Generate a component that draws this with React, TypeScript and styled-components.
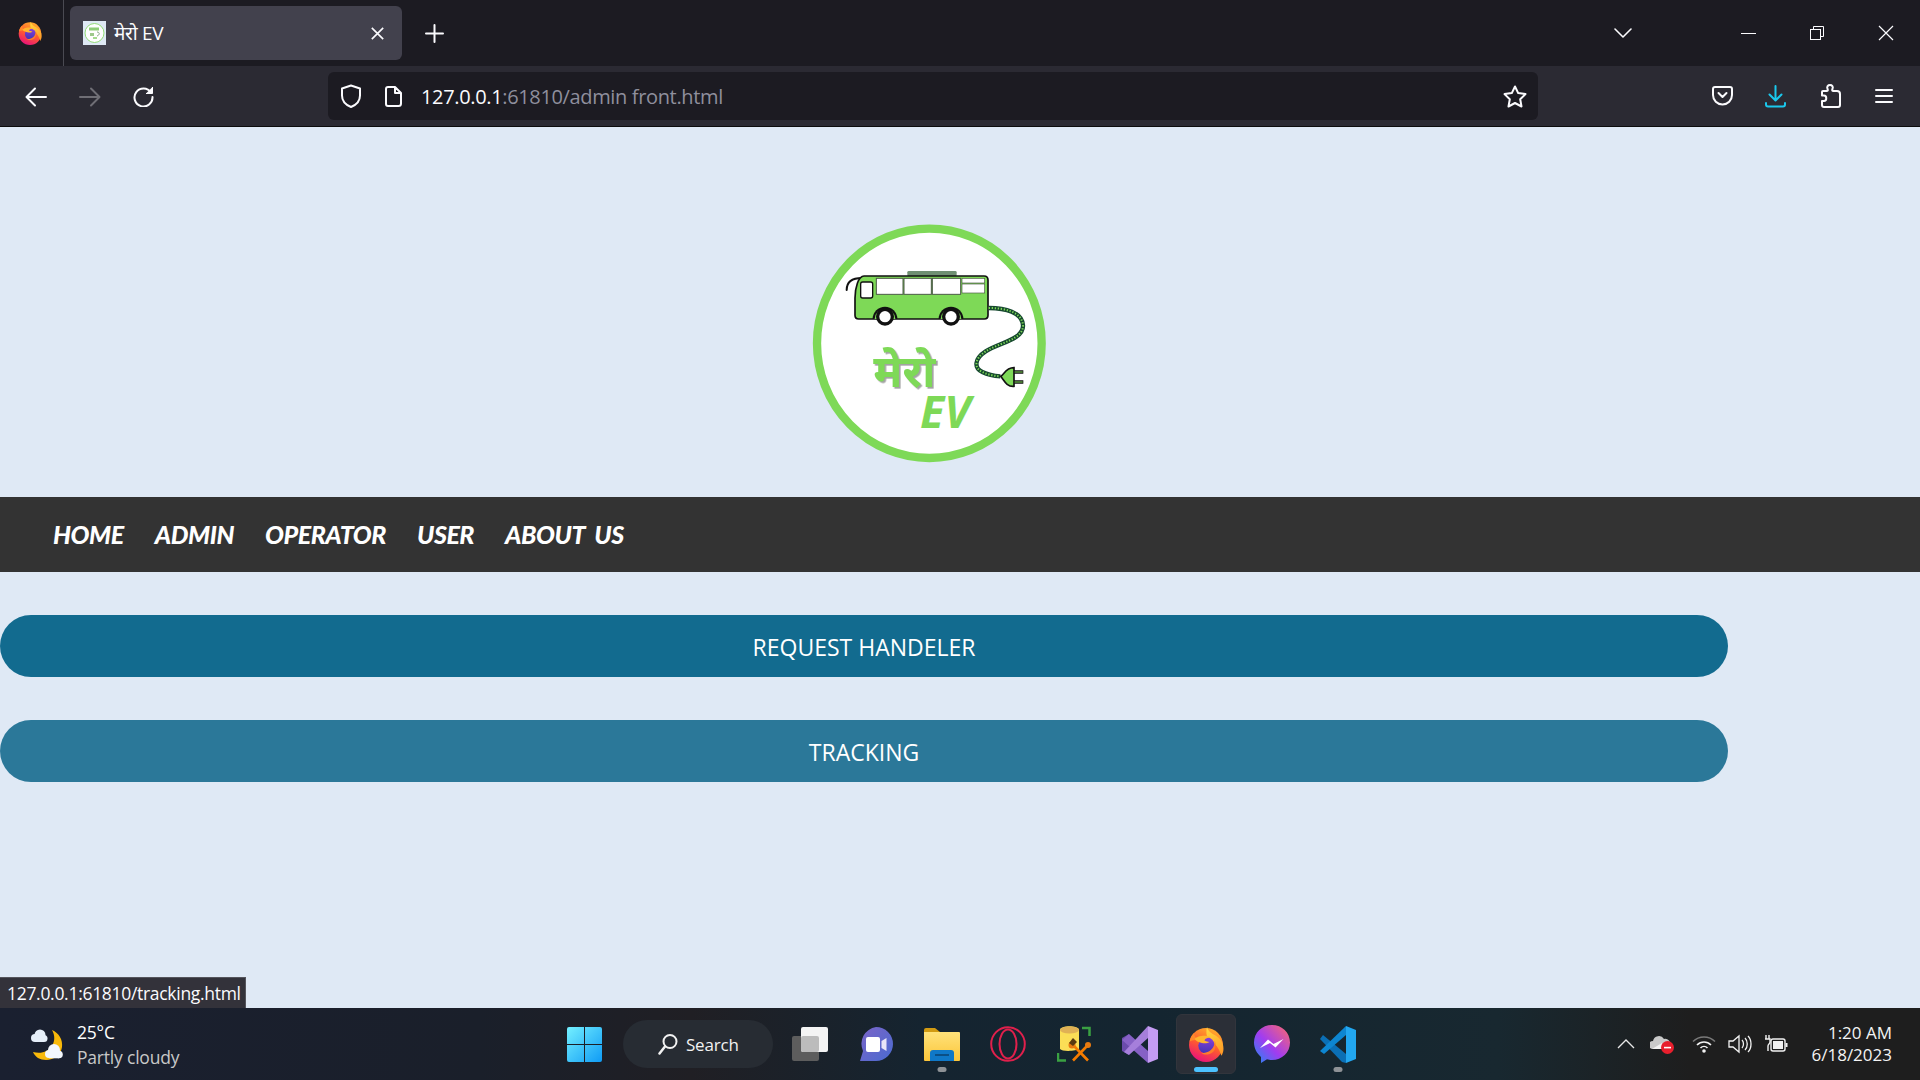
import styled, { createGlobalStyle } from "styled-components";

const GlobalStyle = createGlobalStyle`
  html, body {
    margin: 0;
    padding: 0;
    background: #dfe9f5;
    overflow: hidden;
  }
  * { box-sizing: border-box; }
`;

const UI_FONT = `"Open Sans", "Noto Sans", "Noto Sans Devanagari", "Lohit Devanagari", sans-serif`;

const Page = styled.div`
  width: 1920px;
  height: 1080px;
  display: flex;
  flex-direction: column;
  font-family: ${UI_FONT};
`;

/* ---------- browser chrome ---------- */
const TabBar = styled.div`
  height: 66px;
  flex: none;
  display: flex;
  align-items: center;
  padding: 0 26px 0 18px;
  background: #1c1b22;
`;
const TabDivider = styled.div`
  width: 1px;
  height: 66px;
  margin: 0 6px 0 21px;
  background: #4a4a52;
`;
const Tab = styled.div`
  width: 332px;
  height: 54px;
  display: flex;
  align-items: center;
  padding: 0 18px 0 13px;
  border-radius: 6px;
  background: #42414d;
`;
const TabTitle = styled.span`
  margin-left: 8px;
  font-size: 19px;
  letter-spacing: -0.3px;
  color: #fbfbfe;
`;
const TabClose = styled.div`
  margin-left: auto;
  display: flex;
`;
const NewTab = styled.div`
  margin-left: 23px;
  display: flex;
`;
const WindowControls = styled.div`
  margin-left: auto;
  display: flex;
  align-items: center;
  gap: 54px;
`;
const TabListButton = styled.div`
  display: flex;
  margin-right: 55px;
`;
const Toolbar = styled.div`
  height: 61px;
  flex: none;
  display: flex;
  align-items: center;
  padding-left: 25px;
  background: #2b2a33;
  border-bottom: 1px solid #0c0c0d;
`;
const NavButtons = styled.div`
  display: flex;
  align-items: center;
  gap: 32px;
  margin-top: 1px;
`;
const UrlBar = styled.div`
  width: 1210px;
  height: 48px;
  margin-left: 174px;
  display: flex;
  align-items: center;
  padding: 0 11px 0 12px;
  border-radius: 6px;
  background: #1c1b22;
`;
const UrlText = styled.div`
  margin: 1px 0 0 19px;
  font-size: 20px;
  letter-spacing: -0.35px;
  color: #8f8f9d;
  white-space: pre;
`;
const UrlHost = styled.span`
  color: #fbfbfe;
`;
const UrlPageIcon = styled.div`
  display: flex;
  margin-left: 23px;
`;
const UrlStar = styled.div`
  display: flex;
  margin-left: auto;
`;
const ToolIcons = styled.div`
  margin-left: 174px;
  display: flex;
  align-items: center;
`;
const ToolSlot = styled.div<{ $gap?: number }>`
  display: flex;
  margin-left: ${(p) => p.$gap ?? 0}px;
`;
const ArrowSvg = styled.svg<{ $flip?: boolean }>`
  transform: ${(p) => (p.$flip ? "scaleX(-1)" : "none")};
`;

/* ---------- page content ---------- */
const Content = styled.main`
  position: relative;
  flex: 1;
  display: flex;
  flex-direction: column;
  background: #dfe9f5;
`;
const LogoHeader = styled.header`
  height: 370px;
  flex: none;
  display: flex;
  justify-content: center;
  padding: 83px 70px 0 0;
`;
const LogoHindi = styled.text`
  font-family: "Noto Sans Devanagari", "Lohit Devanagari", "Noto Sans", sans-serif;
  font-size: 134px;
  font-weight: 700;
  fill: #7ed957;
  filter: drop-shadow(5px 5px 0 #a3a3a3);
`;
const LogoEv = styled.text`
  font-family: "Open Sans", sans-serif;
  font-size: 134px;
  font-weight: 700;
  font-style: italic;
  fill: #7ed957;
`;
const Nav = styled.nav`
  height: 75px;
  flex: none;
  display: flex;
  align-items: center;
  gap: 31px;
  padding: 0 0 2px 53px;
  background: #333333;
`;
const NavLink = styled.a`
  font-family: "Lato", sans-serif;
  font-size: 25px;
  font-weight: 900;
  font-style: italic;
  letter-spacing: -0.45px;
  word-spacing: 5px;
  color: #ffffff;
`;
const ButtonStack = styled.div`
  display: flex;
  flex-direction: column;
  gap: 43px;
  padding-top: 43px;
`;
const PillButton = styled.button<{ $hovered?: boolean }>`
  width: 1728px;
  height: 62px;
  border: 0;
  border-radius: 31px;
  padding: 2px 0 0;
  font-family: ${UI_FONT};
  font-size: 23px;
  color: #ffffff;
  background: ${(p) => (p.$hovered ? "#2b7899" : "#126b8f")};
`;
const StatusTip = styled.div`
  position: absolute;
  left: 0;
  bottom: 0;
  height: 31px;
  width: 246px;
  padding-left: 7px;
  line-height: 31px;
  font-size: 17.5px;
  letter-spacing: -0.3px;
  color: #fbfbfe;
  background: #33323a;
  border-top: 1px solid #55555c;
  border-right: 1px solid #55555c;
  white-space: nowrap;
`;

/* ---------- taskbar ---------- */
const Taskbar = styled.footer`
  height: 72px;
  flex: none;
  display: flex;
  align-items: center;
  padding-right: 28px;
  background: linear-gradient(90deg, #1a2030 0%, #1a1f2a 25%, #201f24 36%, #152430 48%, #142530 60%, #182830 78%, #1e1e1e 88%, #1e1e1e 100%);
`;
const Weather = styled.div`
  width: 537px;
  margin-left: 30px;
  display: flex;
  align-items: center;
  flex: none;
`;
const WeatherText = styled.div`
  margin: 2px 0 0 11px;
  display: flex;
  flex-direction: column;
  gap: 2px;
  font-size: 17.5px;
  line-height: 23px;
  letter-spacing: -0.2px;
`;
const WeatherTemp = styled.span`
  color: #ffffff;
`;
const WeatherSky = styled.span`
  color: #c8c8c8;
`;
const StartIcon = styled.div`
  display: flex;
  flex: none;
`;
const SearchPill = styled.div`
  width: 150px;
  height: 48px;
  margin: 0 7px 0 21px;
  flex: none;
  display: flex;
  align-items: center;
  gap: 8px;
  padding-left: 35px;
  border-radius: 24px;
  background: #272c33;
  font-size: 17px;
  letter-spacing: -0.2px;
  color: #f2f2f2;
`;
const TaskIcons = styled.div`
  display: flex;
  gap: 6px;
`;
const TaskItem = styled.div<{ $active?: boolean }>`
  position: relative;
  width: 60px;
  height: 60px;
  display: flex;
  align-items: center;
  justify-content: center;
  border-radius: 6px;
  border: 1px solid ${(p) => (p.$active ? "#32353c" : "transparent")};
  background: ${(p) => (p.$active ? "#2b2f37" : "transparent")};
`;
const RunDot = styled.div<{ $active?: boolean }>`
  position: absolute;
  bottom: 1px;
  left: 50%;
  width: ${(p) => (p.$active ? "24px" : "9px")};
  height: 5px;
  border-radius: 3px;
  transform: translateX(-50%);
  background: ${(p) => (p.$active ? "#4cc2ff" : "#8e9296")};
`;
const Tray = styled.div`
  margin-left: auto;
  display: flex;
  align-items: center;
  gap: 12px;
`;
const TrayChevronSlot = styled.div`
  display: flex;
  margin-right: 3px;
`;
const TrayWifiSlot = styled.div`
  display: flex;
  margin-left: 6px;
`;
const Clock = styled.div`
  margin-left: 11px;
  display: flex;
  flex-direction: column;
  align-items: flex-end;
  font-size: 17px;
  line-height: 22px;
  color: #f4f4f4;
`;

/* ---------- drawings ---------- */
const S = { fill: "none", stroke: "#fbfbfe", strokeWidth: 2, strokeLinecap: "round", strokeLinejoin: "round" } as const;

const FirefoxDefs = () => (
  <defs>
    <linearGradient id="ffBody" x1="0.75" y1="0.1" x2="0.35" y2="1">
      <stop offset="0" stopColor="#ffa42b" />
      <stop offset="0.5" stopColor="#ff5a2f" />
      <stop offset="1" stopColor="#e8127a" />
    </linearGradient>
    <linearGradient id="ffFlame" x1="0.3" y1="0" x2="0.7" y2="1">
      <stop offset="0" stopColor="#ffd53d" />
      <stop offset="1" stopColor="#ff9a26" />
    </linearGradient>
    <linearGradient id="ffGlobe" x1="0.5" y1="0" x2="0.4" y2="1">
      <stop offset="0" stopColor="#8a3fd8" />
      <stop offset="1" stopColor="#3f35b5" />
    </linearGradient>
  </defs>
);

const FirefoxIcon = ({ size }: { size: number }) => (
  <svg width={size} height={size} viewBox="0 0 34 35">
    <FirefoxDefs />
    <circle cx="17" cy="18.500" r="16.500" fill="url(#ffBody)" />
    <path d="M18 1c1 4 4 6 8 8 5 3 8 7 8 13 0 3-1 5-2 7-2-7-6-13-12-15-3-4-3-9-2-13z" fill="url(#ffFlame)" />
    <path d="M1 15c.5-3 2-6 4.500-8.500 0 2.500.5 4 2 5 2-2 6-3 9-2.500-2 1-3 2.500-3.500 4-5 0-9 1-12 2z" fill="#ff8a2a" />
    <circle cx="17.500" cy="19" r="8" fill="url(#ffGlobe)" />
    <path d="M6 12.500c4-3.500 11-4 16-1.500-3 .2-6 1.200-6.500 3 1.500 1 3 .8 5 1.500-2 1.500-5 1.500-7.500 1-3.500-.5-6-2-7-4z" fill="#ffb52e" />
    <path d="M25.500 14c1.500 4 1 9-2 11.500-3 2.500-8 3-11 1 5 0 9-2 11-5 1.500-2.500 2-5 2-7.500z" fill="#ff7d2a" />
  </svg>
);

const TabFavicon = () => (
  <svg width="23" height="24" viewBox="0 0 23 24">
    <rect width="23" height="24" fill="#dfe9f5" />
    <circle cx="11.500" cy="12" r="9.500" fill="#fff" stroke="#93dc78" strokeWidth="1" />
    <rect x="6" y="6.500" width="10" height="3" fill="#8fce78" />
    <rect x="7" y="12" width="4" height="3" fill="#9ec98d" />
    <path d="M14 11c3 0 3 3 0 4" fill="none" stroke="#8aa68a" strokeWidth="1" />
    <rect x="10" y="16" width="4" height="2" fill="#a5dc90" />
  </svg>
);

const CORD = "M596 294c50 0 100 12 103 52 2 42-70 52-112 78-34 22-36 50-10 62 16 8 36 12 54 13";

const LogoMark = () => (
  <svg width="270" height="260" viewBox="0 0 810 780">
    <ellipse cx="418" cy="400" rx="337" ry="344" fill="#ffffff" stroke="#7ed957" strokeWidth="25" />
    {/* bus */}
    <rect x="352" y="183" width="148" height="16" rx="4" fill="#6f8f72" />
    <path d="M170 240c0-25 15-36 46-36" fill="none" stroke="#111" strokeWidth="6" strokeLinecap="round" />
    <path d="M222 198h360c8 0 12 4 12 12v106c0 7-4 11-11 11H206c-8 0-11-4-11-11v-52c0-30 10-66 27-66z" fill="#7ed957" stroke="#111" strokeWidth="5" />
    <rect x="212" y="216" width="36" height="48" rx="6" fill="#fff" stroke="#111" strokeWidth="4" />
    <rect x="259" y="205" width="80" height="48" fill="#fff" stroke="#4b5a45" strokeWidth="3" />
    <rect x="342" y="205" width="82" height="48" fill="#fff" stroke="#4b5a45" strokeWidth="3" />
    <rect x="427" y="205" width="85" height="48" fill="#fff" stroke="#4b5a45" strokeWidth="3" />
    <rect x="516" y="205" width="68" height="14" fill="#fff" stroke="#4b5a45" strokeWidth="2" />
    <rect x="516" y="222" width="68" height="27" fill="#fff" stroke="#4b5a45" strokeWidth="2" />
    <path d="M248 327a37 37 0 0 1 74 0z" fill="#111" />
    <path d="M254 327a31 31 0 0 1 62 0z" fill="#7ed957" />
    <circle cx="285" cy="320" r="27" fill="#111" />
    <circle cx="285" cy="320" r="17" fill="#fff" />
    <path d="M446 327a37 37 0 0 1 74 0z" fill="#111" />
    <path d="M452 327a31 31 0 0 1 62 0z" fill="#7ed957" />
    <circle cx="483" cy="320" r="27" fill="#111" />
    <circle cx="483" cy="320" r="17" fill="#fff" />
    {/* cord and plug */}
    <path d={CORD} fill="none" stroke="#17492f" strokeWidth="13" />
    <path d={CORD} fill="none" stroke="#7ed957" strokeWidth="6" strokeDasharray="4 5" />
    <path d="M632 499c10-4 14-26 40-26v56c-22 2-30-18-40-30z" fill="#7ed957" stroke="#111" strokeWidth="5" />
    <path d="M672 486h28M672 516h28" stroke="#111" strokeWidth="10" />
    <path d="M674 486h24M674 516h24" stroke="#7ed957" strokeWidth="3" />
    {/* wordmark */}
    <LogoHindi x="250" y="532">मेरो</LogoHindi>
    <LogoEv x="390" y="655">EV</LogoEv>
  </svg>
);

const CloseGlyph = ({ size, width }: { size: number; width: number }) => (
  <svg width={size} height={size} viewBox="0 0 16 16">
    <path d="M1 1l14 14M15 1L1 15" {...S} strokeWidth={width} strokeLinecap="butt" />
  </svg>
);

const PlusIcon = () => (
  <svg width="19" height="19" viewBox="0 0 19 19">
    <path d="M9.500 1v17M1 9.500h17" {...S} />
  </svg>
);

const ChevronDown = () => (
  <svg width="18" height="10" viewBox="0 0 18 10">
    <path d="M1 1l8 8 8-8" {...S} strokeWidth={1.6} />
  </svg>
);

const MinimizeIcon = () => (
  <svg width="15" height="15" viewBox="0 0 15 15">
    <path d="M0 7.500h15" {...S} strokeWidth={1} strokeLinecap="butt" />
  </svg>
);

const RestoreIcon = () => (
  <svg width="14" height="14" viewBox="0 0 14 14">
    <rect x="0.500" y="3.500" width="10" height="10" fill="none" stroke="#fbfbfe" />
    <path d="M3.500 3.500V0.500h10v10h-3" fill="none" stroke="#fbfbfe" />
  </svg>
);

const ArrowIcon = ({ dim }: { dim?: boolean }) => (
  <ArrowSvg $flip={dim} width="22" height="20" viewBox="0 0 22 20">
    <path d="M21 10H2M10 1.500L1.500 10l8.500 8.500" {...S} stroke={dim ? "#6f6e75" : "#fbfbfe"} />
  </ArrowSvg>
);

const ReloadIcon = () => (
  <svg width="21" height="21" viewBox="0 0 21 21">
    <path d="M18 6.500A9 9 0 1 0 19.500 11" {...S} />
    <path d="M19.500 1v6.500H13" fill="#fbfbfe" stroke="#fbfbfe" strokeWidth="1" strokeLinejoin="round" />
  </svg>
);

const ShieldIcon = () => (
  <svg width="22" height="24" viewBox="0 0 22 24">
    <path d="M11 1.500l9 3v7c0 6-4 9.500-9 11.500-5-2-9-5.500-9-11.500v-7z" {...S} />
  </svg>
);

const PageIcon = () => (
  <svg width="17" height="21" viewBox="0 0 17 21">
    <path d="M3 1h7l6 6v10.500a2.500 2.500 0 0 1-2.500 2.500h-10.500A2 2 0 0 1 1 18V3a2 2 0 0 1 2-2zM10 1v6h6" {...S} />
  </svg>
);

const StarIcon = () => (
  <svg width="24" height="23" viewBox="0 0 24 23">
    <path d="M12 1.500l3.200 6.600 7.300 1-5.300 5.100 1.300 7.300L12 18l-6.500 3.500 1.300-7.300L1.500 9.100l7.300-1z" {...S} />
  </svg>
);

const PocketIcon = () => (
  <svg width="21" height="20" viewBox="0 0 21 20">
    <path d="M3 1h15a2 2 0 0 1 2 2v6a9.500 9.500 0 0 1-19 0V3a2 2 0 0 1 2-2z" {...S} />
    <path d="M6.500 7l4 4 4-4" {...S} />
  </svg>
);

const DownloadIcon = () => (
  <svg width="21" height="23" viewBox="0 0 21 23">
    <path d="M10.500 1v14M4.500 9.500l6 6 6-6M1 18v1.500a2 2 0 0 0 2 2h15a2 2 0 0 0 2-2V18" {...S} stroke="#1ac8ed" />
  </svg>
);

const PuzzleIcon = () => (
  <svg width="20" height="24" viewBox="0 0 20 24">
    <path d="M2 7h4c1 0 1-1 .5-2C5.500 2.500 7 1 9 1s3.500 1.500 2.500 4c-.5 1-.5 2 .5 2h4a3 3 0 0 1 3 3v11a2 2 0 0 1-2 2H3a2 2 0 0 1-2-2v-4h2c3 0 3-5.500 0-5.500H1V8a1 1 0 0 1 1-1z" {...S} />
  </svg>
);

const MenuIcon = () => (
  <svg width="18" height="16" viewBox="0 0 18 16">
    <path d="M1 2h16M1 8h16M1 14h16" {...S} />
  </svg>
);

const WeatherIcon = () => (
  <svg width="36" height="33" viewBox="0 0 36 33">
    <path d="M22 2c7 3 11 10 10 17-1 8-8 13-16 13-6 0-11-3-13-8 8 2 15 0 19-6 3-5 3-11 0-16z" fill="#f9b90a" />
    <g fill="#e6eff9">
      <circle cx="5" cy="10" r="4" />
      <circle cx="10" cy="7" r="5.500" />
      <circle cx="14" cy="10.500" r="3.500" />
      <rect x="5" y="9" width="9" height="5" />
    </g>
    <g fill="#f2f6fc">
      <circle cx="19" cy="26" r="4" />
      <circle cx="24" cy="22" r="6" />
      <circle cx="29" cy="26.500" r="3.800" />
      <rect x="19" y="25" width="10" height="5.300" />
    </g>
  </svg>
);

const WindowsIcon = () => (
  <svg width="35" height="35" viewBox="0 0 35 35">
    <defs>
      <linearGradient id="winBlue" x1="0" y1="0" x2="1" y2="1">
        <stop offset="0" stopColor="#74f0ff" />
        <stop offset="1" stopColor="#0f9bf5" />
      </linearGradient>
    </defs>
    <path d="M0 2a2 2 0 0 1 2-2h15v17H0zM18 0h15a2 2 0 0 1 2 2v15H18zM0 18h17v17H2a2 2 0 0 1-2-2zM18 18h17v15a2 2 0 0 1-2 2H18z" fill="url(#winBlue)" />
  </svg>
);

const SearchIcon = () => (
  <svg width="20" height="22" viewBox="0 0 20 22">
    <circle cx="12" cy="8.500" r="6.500" fill="none" stroke="#f2f2f2" strokeWidth="2" />
    <path d="M7 13.500L1.500 20.500" fill="none" stroke="#f2f2f2" strokeWidth="2.500" strokeLinecap="round" />
  </svg>
);

const TaskViewIcon = () => (
  <svg width="36" height="34" viewBox="0 0 36 34">
    <rect x="0" y="9" width="27" height="25" rx="2" fill="#5d5d5d" />
    <rect x="9" y="0" width="27" height="25" rx="2" fill="#f4f4f4" />
    <rect x="9" y="9" width="18" height="16" rx="2" fill="#bcbcbc" />
  </svg>
);

const MeetIcon = () => (
  <svg width="34" height="35" viewBox="0 0 34 35">
    <defs>
      <linearGradient id="meetFill" x1="0" y1="0" x2="1" y2="1">
        <stop offset="0" stopColor="#7b64c8" />
        <stop offset="1" stopColor="#4a6bd0" />
      </linearGradient>
    </defs>
    <path d="M17 0a17 17 0 0 1 0 34H1l3-10A17 17 0 0 1 17 0z" fill="url(#meetFill)" />
    <rect x="7" y="10" width="14" height="15" rx="2" fill="#fff" />
    <path d="M22.500 14l5-3v13l-5-3z" fill="#e8e6f8" />
  </svg>
);

const FolderIcon = () => (
  <svg width="36" height="33" viewBox="0 0 36 33">
    <defs>
      <linearGradient id="folderFill" x1="0" y1="0" x2="0" y2="1">
        <stop offset="0" stopColor="#ffe27a" />
        <stop offset="1" stopColor="#fcc63a" />
      </linearGradient>
    </defs>
    <path d="M0 2a2 2 0 0 1 2-2h9l5 4h-16z" fill="#d29b12" />
    <path d="M0 4h35a1 1 0 0 1 1 1v27a1 1 0 0 1-1 1H1a1 1 0 0 1-1-1z" fill="url(#folderFill)" />
    <path d="M6 33v-8a3 3 0 0 1 3-3h18a3 3 0 0 1 3 3v8z" fill="#0f78c8" />
    <rect x="11" y="26" width="14" height="2" fill="#0b4f86" />
  </svg>
);

const OperaIcon = () => (
  <svg width="36" height="36" viewBox="0 0 36 36">
    <circle cx="18" cy="18" r="16.800" fill="none" stroke="#e0204c" strokeWidth="2" />
    <ellipse cx="18" cy="18" rx="8.500" ry="14.500" fill="none" stroke="#e0204c" strokeWidth="2" />
  </svg>
);

const XamppIcon = () => (
  <svg width="34" height="36" viewBox="0 0 34 36">
    <path d="M3 4c0-5 19-5 19 0v19c-2 2-17 3-19 0z" fill="#fbde56" />
    <ellipse cx="12.500" cy="4" rx="9.500" ry="3.500" fill="#e0b155" />
    <path d="M25 2h7.500v8M1 27v7.500h8" fill="none" stroke="#3aa142" strokeWidth="2.500" />
    <path d="M17 20l14 14.500M30 20L16 34.500" stroke="#f57c00" strokeWidth="2.600" />
    <circle cx="15" cy="19" r="3.500" fill="#e87a10" />
    <circle cx="31" cy="19" r="3" fill="#e87a10" />
    <path d="M12 17l4-5 4 4-4 4z" fill="#5a3a10" />
  </svg>
);

const VisualStudioIcon = () => (
  <svg width="36" height="37" viewBox="0 0 36 37">
    <path d="M0 12l7-4v21l-7-4z" fill="#6a4bab" />
    <path d="M7 8l19 17v12L0 14z" fill="#8661c5" />
    <path d="M26 0v12L7 29l-5-3z" fill="#a67fdb" />
    <path d="M26 0l10 4v29l-10 4z" fill="#c49cf2" />
  </svg>
);

const MessengerIcon = () => (
  <svg width="36" height="38" viewBox="0 0 36 38">
    <defs>
      <linearGradient id="msgFill" x1="0" y1="1" x2="1" y2="0">
        <stop offset="0" stopColor="#1f8af5" />
        <stop offset="0.45" stopColor="#a13cf0" />
        <stop offset="1" stopColor="#ff6a6a" />
      </linearGradient>
    </defs>
    <path d="M18 0c10 0 18 7.500 18 17.500S28 35 18 35c-2 0-3.500-.3-5-.7L7 38v-6C3 28.500 0 23.500 0 17.500 0 7.500 8 0 18 0z" fill="url(#msgFill)" />
    <path d="M6 23l8-8.500 5.500 4.500 10-5-8 8.500-5.500-4.500z" fill="#fff" />
  </svg>
);

const VsCodeIcon = () => (
  <svg width="36" height="37" viewBox="0 0 36 37">
    <path d="M3 9l23 19v9l-4-1L0 13z" fill="#0b6fb5" />
    <path d="M26 0v9L4 28l-4-3z" fill="#0d86d1" />
    <path d="M26 0l10 4v29l-10 4z" fill="#22a7f0" />
  </svg>
);

const TrayChevron = () => (
  <svg width="18" height="10" viewBox="0 0 18 10">
    <path d="M1 9l8-8 8 8" fill="none" stroke="#e8e8e8" strokeWidth="1.300" />
  </svg>
);

const OneDriveIcon = () => (
  <svg width="24" height="20" viewBox="0 0 24 20">
    <path d="M3 15a4 4 0 0 1 0-8 6 6 0 0 1 11-2 5 5 0 0 1 6 6v4z" fill="#c9c9c9" />
    <path d="M2 15l10-6 0 6z" fill="#f2f2f2" />
    <circle cx="17.500" cy="13.500" r="6.500" fill="#e81f2d" />
    <rect x="14" y="12.800" width="7" height="1.600" fill="#fff" />
  </svg>
);

const WifiIcon = () => (
  <svg width="24" height="18" viewBox="0 0 24 18">
    <path d="M1 6.500c6-6 16-6 22 0" fill="none" stroke="#7a7a7a" strokeWidth="1.500" />
    <path d="M5 10c4-4 10-4 14 0M8.500 13c2-2 5-2 7 0" fill="none" stroke="#f2f2f2" strokeWidth="1.600" />
    <circle cx="12" cy="16" r="1.800" fill="#f2f2f2" />
  </svg>
);

const VolumeIcon = () => (
  <svg width="24" height="20" viewBox="0 0 24 20">
    <path d="M1 7h4l6-5v16l-6-5H1z" fill="none" stroke="#f2f2f2" strokeWidth="1.300" />
    <path d="M14 6c2 2 2 6 0 8M17 4c3 3 3 9 0 12M20 2c4 4 4 12 0 16" fill="none" stroke="#f2f2f2" strokeWidth="1.300" />
  </svg>
);

const BatteryIcon = () => (
  <svg width="24" height="18" viewBox="0 0 24 18">
    <rect x="7" y="4" width="14" height="12" rx="2" fill="none" stroke="#f2f2f2" strokeWidth="1.400" />
    <rect x="9" y="6" width="10" height="8" fill="#f2f2f2" />
    <rect x="21.500" y="8" width="2" height="4" fill="#f2f2f2" />
    <path d="M2 0v4M5 0v4M1 4h5v3c0 2-2 2-2 4v5" fill="none" stroke="#f2f2f2" strokeWidth="1.400" />
  </svg>
);

const NAV_ITEMS = ["HOME", "ADMIN", "OPERATOR", "USER", "ABOUT US"];

const App = (): JSX.Element => {
  return (
    <Page>
      <GlobalStyle />
      <TabBar>
        <FirefoxIcon size={24} />
        <TabDivider />
        <Tab>
          <TabFavicon />
          <TabTitle>मेरो EV</TabTitle>
          <TabClose>
            <CloseGlyph size={13} width={2} />
          </TabClose>
        </Tab>
        <NewTab>
          <PlusIcon />
        </NewTab>
        <WindowControls>
          <TabListButton>
            <ChevronDown />
          </TabListButton>
          <MinimizeIcon />
          <RestoreIcon />
          <CloseGlyph size={16} width={1.2} />
        </WindowControls>
      </TabBar>
      <Toolbar>
        <NavButtons>
          <ArrowIcon />
          <ArrowIcon dim />
          <ReloadIcon />
        </NavButtons>
        <UrlBar>
          <ShieldIcon />
          <UrlPageIcon>
            <PageIcon />
          </UrlPageIcon>
          <UrlText>
            <UrlHost>127.0.0.1</UrlHost>:61810/admin front.html
          </UrlText>
          <UrlStar>
            <StarIcon />
          </UrlStar>
        </UrlBar>
        <ToolIcons>
          <ToolSlot><PocketIcon /></ToolSlot>
          <ToolSlot $gap={32}><DownloadIcon /></ToolSlot>
          <ToolSlot $gap={35}><PuzzleIcon /></ToolSlot>
          <ToolSlot $gap={34}><MenuIcon /></ToolSlot>
        </ToolIcons>
      </Toolbar>
      <Content>
        <LogoHeader>
          <LogoMark />
        </LogoHeader>
        <Nav>
          {NAV_ITEMS.map((item) => (
            <NavLink key={item}>{item}</NavLink>
          ))}
        </Nav>
        <ButtonStack>
          <PillButton>REQUEST HANDELER</PillButton>
          <PillButton $hovered>TRACKING</PillButton>
        </ButtonStack>
        <StatusTip>127.0.0.1:61810/tracking.html</StatusTip>
      </Content>
      <Taskbar>
        <Weather>
          <WeatherIcon />
          <WeatherText>
            <WeatherTemp>25°C</WeatherTemp>
            <WeatherSky>Partly cloudy</WeatherSky>
          </WeatherText>
        </Weather>
        <StartIcon>
          <WindowsIcon />
        </StartIcon>
        <SearchPill>
          <SearchIcon />
          Search
        </SearchPill>
        <TaskIcons>
          <TaskItem><TaskViewIcon /></TaskItem>
          <TaskItem><MeetIcon /></TaskItem>
          <TaskItem><FolderIcon /><RunDot /></TaskItem>
          <TaskItem><OperaIcon /></TaskItem>
          <TaskItem><XamppIcon /></TaskItem>
          <TaskItem><VisualStudioIcon /></TaskItem>
          <TaskItem $active><FirefoxIcon size={36} /><RunDot $active /></TaskItem>
          <TaskItem><MessengerIcon /></TaskItem>
          <TaskItem><VsCodeIcon /><RunDot /></TaskItem>
        </TaskIcons>
        <Tray>
          <TrayChevronSlot><TrayChevron /></TrayChevronSlot>
          <OneDriveIcon />
          <TrayWifiSlot><WifiIcon /></TrayWifiSlot>
          <VolumeIcon />
          <BatteryIcon />
          <Clock>
            <span>1:20 AM</span>
            <span>6/18/2023</span>
          </Clock>
        </Tray>
      </Taskbar>
    </Page>
  );
};

export default App;
